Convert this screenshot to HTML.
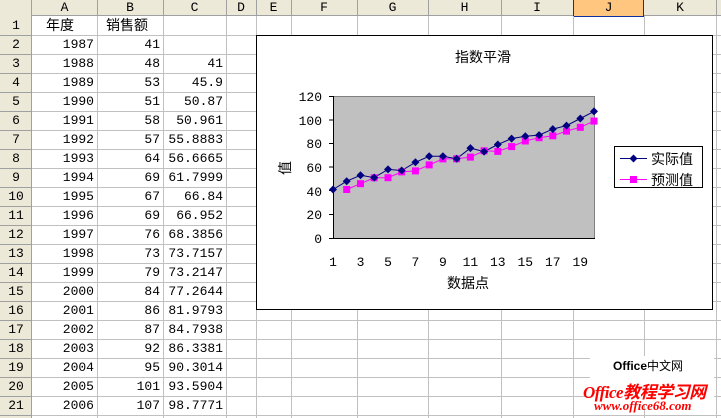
<!DOCTYPE html>
<html><head><meta charset="utf-8"><style>
*{margin:0;padding:0;box-sizing:border-box}
body{width:721px;height:418px;overflow:hidden;background:#fff;position:relative;font-family:"Liberation Mono","Noto Sans CJK SC",monospace;font-size:13px;color:#000}
.h{position:absolute;background:#ece9d8;}
.c{position:absolute;height:19px;line-height:19px;white-space:nowrap}
.ctr{text-align:center}
.vl{position:absolute;top:16px;width:1px;height:402px;background:#c0c0c0}
.hl{position:absolute;left:32px;width:689px;height:1px;background:#c0c0c0}
</style></head><body>
<div class="h" style="left:0;top:0;width:721px;height:16px;border-bottom:1px solid #a0a0a0"></div>
<div class="h" style="left:0;top:0;width:32px;height:418px;border-right:1px solid #a0a0a0"></div>
<div style="position:absolute;left:573px;top:0;width:71px;height:17px;background:#ffc680;border:1px solid #1030a0;border-top:none"></div>
<div class="c ctr" style="left:32px;top:-2px;width:65px">A</div>
<div class="c ctr" style="left:97px;top:-2px;width:66px">B</div>
<div class="c ctr" style="left:163px;top:-2px;width:63px">C</div>
<div class="c ctr" style="left:226px;top:-2px;width:30px">D</div>
<div class="c ctr" style="left:256px;top:-2px;width:35px">E</div>
<div class="c ctr" style="left:291px;top:-2px;width:66px">F</div>
<div class="c ctr" style="left:357px;top:-2px;width:71px">G</div>
<div class="c ctr" style="left:428px;top:-2px;width:73px">H</div>
<div class="c ctr" style="left:501px;top:-2px;width:72px">I</div>
<div class="c ctr" style="left:573px;top:-2px;width:71px">J</div>
<div class="c ctr" style="left:644px;top:-2px;width:72px">K</div>
<div style="position:absolute;top:0;height:16px;left:97px;width:1px;background:#a0a0a0"></div>
<div style="position:absolute;top:0;height:16px;left:163px;width:1px;background:#a0a0a0"></div>
<div style="position:absolute;top:0;height:16px;left:226px;width:1px;background:#a0a0a0"></div>
<div style="position:absolute;top:0;height:16px;left:256px;width:1px;background:#a0a0a0"></div>
<div style="position:absolute;top:0;height:16px;left:291px;width:1px;background:#a0a0a0"></div>
<div style="position:absolute;top:0;height:16px;left:357px;width:1px;background:#a0a0a0"></div>
<div style="position:absolute;top:0;height:16px;left:428px;width:1px;background:#a0a0a0"></div>
<div style="position:absolute;top:0;height:16px;left:501px;width:1px;background:#a0a0a0"></div>
<div style="position:absolute;top:0;height:16px;left:716px;width:1px;background:#a0a0a0"></div>
<div class="vl" style="left:97px"></div><div class="vl" style="left:163px"></div><div class="vl" style="left:226px"></div><div class="vl" style="left:256px"></div><div class="vl" style="left:291px"></div><div class="vl" style="left:357px"></div><div class="vl" style="left:428px"></div><div class="vl" style="left:501px"></div><div class="vl" style="left:573px"></div><div class="vl" style="left:644px"></div><div class="vl" style="left:716px"></div>
<div class="hl" style="top:35px"></div><div class="hl" style="top:54px"></div><div class="hl" style="top:73px"></div><div class="hl" style="top:92px"></div><div class="hl" style="top:111px"></div><div class="hl" style="top:130px"></div><div class="hl" style="top:149px"></div><div class="hl" style="top:168px"></div><div class="hl" style="top:187px"></div><div class="hl" style="top:206px"></div><div class="hl" style="top:225px"></div><div class="hl" style="top:244px"></div><div class="hl" style="top:263px"></div><div class="hl" style="top:282px"></div><div class="hl" style="top:301px"></div><div class="hl" style="top:320px"></div><div class="hl" style="top:339px"></div><div class="hl" style="top:358px"></div><div class="hl" style="top:377px"></div><div class="hl" style="top:396px"></div><div class="hl" style="top:415px"></div>
<div style="position:absolute;left:0;width:32px;top:35px;height:1px;background:#a0a0a0;box-shadow:0 19px #a0a0a0,0 38px #a0a0a0,0 57px #a0a0a0,0 76px #a0a0a0,0 95px #a0a0a0,0 114px #a0a0a0,0 133px #a0a0a0,0 152px #a0a0a0,0 171px #a0a0a0,0 190px #a0a0a0,0 209px #a0a0a0,0 228px #a0a0a0,0 247px #a0a0a0,0 266px #a0a0a0,0 285px #a0a0a0,0 304px #a0a0a0,0 323px #a0a0a0,0 342px #a0a0a0,0 361px #a0a0a0,0 380px #a0a0a0"></div>
<div style="position:absolute;left:0;top:16px;width:32px;line-height:19px;text-align:center">1<br>2<br>3<br>4<br>5<br>6<br>7<br>8<br>9<br>10<br>11<br>12<br>13<br>14<br>15<br>16<br>17<br>18<br>19<br>20<br>21</div>
<div class="c" style="left:46px;top:16px;font-family:'Noto Sans CJK SC',sans-serif;font-size:14px">年度</div>
<div style="position:absolute;left:32px;top:35px;width:65px;line-height:19px;text-align:right;padding-right:3px">1987<br>1988<br>1989<br>1990<br>1991<br>1992<br>1993<br>1994<br>1995<br>1996<br>1997<br>1998<br>1999<br>2000<br>2001<br>2002<br>2003<br>2004<br>2005<br>2006</div>
<div class="c" style="left:106px;top:16px;font-family:'Noto Sans CJK SC',sans-serif;font-size:14px">销售额</div>
<div style="position:absolute;left:97px;top:35px;width:66px;line-height:19px;text-align:right;padding-right:3px">41<br>48<br>53<br>51<br>58<br>57<br>64<br>69<br>67<br>69<br>76<br>73<br>79<br>84<br>86<br>87<br>92<br>95<br>101<br>107</div>
<div style="position:absolute;left:163px;top:54px;width:63px;line-height:19px;text-align:right;padding-right:3px">41<br>45.9<br>50.87<br>50.961<br>55.8883<br>56.6665<br>61.7999<br>66.84<br>66.952<br>68.3856<br>73.7157<br>73.2147<br>77.2644<br>81.9793<br>84.7938<br>86.3381<br>90.3014<br>93.5904<br>98.7771</div>
<svg style="position:absolute;left:0;top:0" width="721" height="418" font-family="Liberation Mono, Noto Sans CJK SC, monospace">
<rect x="256.5" y="35.5" width="456" height="274" fill="#fff" stroke="#000" stroke-width="1"/>
<text x="483" y="62" text-anchor="middle" font-size="14" font-family="Noto Sans CJK SC, sans-serif">指数平滑</text>
<rect x="333.5" y="96.5" width="261" height="142" fill="#c0c0c0" stroke="#808080"/>
<line x1="333.5" y1="96" x2="333.5" y2="238.5" stroke="#000"/>
<line x1="333" y1="238.5" x2="595" y2="238.5" stroke="#000"/>
<g stroke="#000"><line x1="329" y1="96.5" x2="333" y2="96.5"/><line x1="329" y1="120" x2="333" y2="120"/><line x1="329" y1="143.5" x2="333" y2="143.5"/><line x1="329" y1="167" x2="333" y2="167"/><line x1="329" y1="190.5" x2="333" y2="190.5"/><line x1="329" y1="214.5" x2="333" y2="214.5"/><line x1="329" y1="238.5" x2="333" y2="238.5"/></g>
<g font-size="13" text-anchor="end"><text x="322" y="101">120</text><text x="322" y="125">100</text><text x="322" y="148">80</text><text x="322" y="172">60</text><text x="322" y="196">40</text><text x="322" y="219">20</text><text x="322" y="243">0</text></g>
<g font-size="13" text-anchor="middle"><text x="333" y="266">1</text><text x="360.5" y="266">3</text><text x="388" y="266">5</text><text x="415.4" y="266">7</text><text x="442.9" y="266">9</text><text x="470.4" y="266">11</text><text x="497.8" y="266">13</text><text x="525.3" y="266">15</text><text x="552.8" y="266">17</text><text x="580.3" y="266">19</text></g>
<text x="468" y="288" text-anchor="middle" font-size="14" font-family="Noto Sans CJK SC, sans-serif">数据点</text>
<text x="290" y="168" text-anchor="middle" font-size="14" font-family="Noto Sans CJK SC, sans-serif" transform="rotate(-90 290 168)">值</text>
<polyline fill="none" stroke="#000080" points="333,189.5 346.7,181.2 360.5,175.3 374.2,177.6 388,169.4 401.7,170.5 415.4,162.3 429.2,156.3 442.9,156.3 456.6,158.7 470.4,148.1 484.1,151.6 497.8,144.5 511.6,138.6 525.3,136.2 539.1,135.1 552.8,129.1 566.5,125.6 580.3,118.5 594,111.4"/>
<polyline fill="none" stroke="#ff00ff" points="346.7,189.5 360.5,183.7 374.2,177.8 388,177.7 401.7,171.9 415.4,170.9 429.2,164.9 442.9,158.9 456.6,158.8 470.4,157.1 484.1,150.8 497.8,151.4 511.6,146.6 525.3,141 539.1,137.7 552.8,135.8 566.5,131.1 580.3,127.3 594,121.1"/>
<g fill="#ff00ff"><rect x="343.2" y="186" width="7" height="7"/><rect x="357" y="180.2" width="7" height="7"/><rect x="370.7" y="174.3" width="7" height="7"/><rect x="384.5" y="174.2" width="7" height="7"/><rect x="398.2" y="168.4" width="7" height="7"/><rect x="411.9" y="167.4" width="7" height="7"/><rect x="425.7" y="161.4" width="7" height="7"/><rect x="439.4" y="155.4" width="7" height="7"/><rect x="453.1" y="155.3" width="7" height="7"/><rect x="466.9" y="153.6" width="7" height="7"/><rect x="480.6" y="147.3" width="7" height="7"/><rect x="494.3" y="147.9" width="7" height="7"/><rect x="508.1" y="143.1" width="7" height="7"/><rect x="521.8" y="137.5" width="7" height="7"/><rect x="535.6" y="134.2" width="7" height="7"/><rect x="549.3" y="132.3" width="7" height="7"/><rect x="563" y="127.6" width="7" height="7"/><rect x="576.8" y="123.8" width="7" height="7"/><rect x="590.5" y="117.6" width="7" height="7"/></g>
<g fill="#000080">
<path d="M333 185.5l4 4-4 4-4-4z"/><path d="M346.7 177.2l4 4-4 4-4-4z"/><path d="M360.5 171.3l4 4-4 4-4-4z"/><path d="M374.2 173.6l4 4-4 4-4-4z"/><path d="M388 165.4l4 4-4 4-4-4z"/><path d="M401.7 166.5l4 4-4 4-4-4z"/><path d="M415.4 158.3l4 4-4 4-4-4z"/><path d="M429.2 152.3l4 4-4 4-4-4z"/><path d="M442.9 152.3l4 4-4 4-4-4z"/><path d="M456.6 154.7l4 4-4 4-4-4z"/><path d="M470.4 144.1l4 4-4 4-4-4z"/><path d="M484.1 147.6l4 4-4 4-4-4z"/><path d="M497.8 140.5l4 4-4 4-4-4z"/><path d="M511.6 134.6l4 4-4 4-4-4z"/><path d="M525.3 132.2l4 4-4 4-4-4z"/><path d="M539.1 131.1l4 4-4 4-4-4z"/><path d="M552.8 125.1l4 4-4 4-4-4z"/><path d="M566.5 121.6l4 4-4 4-4-4z"/><path d="M580.3 114.5l4 4-4 4-4-4z"/><path d="M594 107.4l4 4-4 4-4-4z"/>
</g>
<rect x="614.5" y="146.5" width="88" height="41" fill="#fff" stroke="#000"/>
<line x1="620" y1="158.5" x2="647" y2="158.5" stroke="#000080"/><path d="M633.5 154.5l4 4-4 4-4-4z" fill="#000080"/>
<line x1="620" y1="179.5" x2="647" y2="179.5" stroke="#ff00ff"/><rect x="630" y="176" width="7" height="7" fill="#ff00ff"/>
<g font-size="14" font-family="Noto Sans CJK SC, sans-serif"><text x="651" y="164">实际值</text><text x="651" y="185">预测值</text></g>
</svg>
<div style="position:absolute;left:590px;top:356px;width:124px;height:48px;background:#fff"></div>
<div style="position:absolute;left:613px;top:357px;font:bold 12px 'Liberation Sans','Noto Sans CJK SC',sans-serif">Office<span style="font-weight:normal">中文网</span></div>
<div style="position:absolute;left:583px;top:378px;color:#f00;font:italic bold 17px 'Liberation Serif','Noto Sans CJK SC',serif;letter-spacing:-0.5px">Office教程学习网</div>
<div style="position:absolute;left:594px;top:398px;color:#f00;font:italic bold 13px 'Liberation Serif',serif">www.office68.com</div>
</body></html>
